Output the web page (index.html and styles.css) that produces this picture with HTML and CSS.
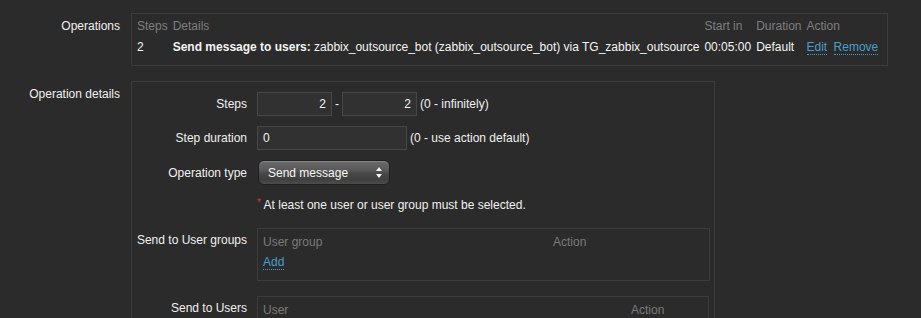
FILE: index.html
```html
<!DOCTYPE html>
<html lang="en">
<head>
<meta charset="utf-8">
<title>Operations</title>
<link rel="stylesheet" href="styles.css">
</head>
<body>
<div class="form">
  <div class="form-label">Operations</div>
  <div class="ops-box">
    <table class="ops-table">
      <thead>
        <tr>
          <th>Steps</th>
          <th>Details</th>
          <th>Start in</th>
          <th>Duration</th>
          <th>Action</th>
        </tr>
      </thead>
      <tbody>
        <tr>
          <td>2</td>
          <td><b>Send message to users:</b> zabbix_outsource_bot (zabbix_outsource_bot) via TG_zabbix_outsource</td>
          <td>00:05:00</td>
          <td>Default</td>
          <td><a class="link" href="#">Edit</a> <a class="link link-gap" href="#">Remove</a></td>
        </tr>
      </tbody>
    </table>
  </div>

  <div class="form-label">Operation details</div>
  <div class="details-box">
    <div class="details-grid">
      <div class="d-label">Steps</div>
      <div class="d-value inline">
        <input class="field num" type="text" value="2">
        <span>-</span>
        <input class="field num" type="text" value="2">
        <span>(0 - infinitely)</span>
      </div>

      <div class="d-label">Step duration</div>
      <div class="d-value inline">
        <input class="field wide" type="text" value="0">
        <span>(0 - use action default)</span>
      </div>

      <div class="d-label">Operation type</div>
      <div class="d-value">
        <div class="select">
          <span>Send message</span>
          <svg class="arrows" width="6" height="11" viewBox="0 0 6 11">
            <path d="M3 0 L6 4 L0 4 Z" fill="#f2f2f2"/>
            <path d="M0 7 L6 7 L3 11 Z" fill="#f2f2f2"/>
          </svg>
        </div>
      </div>

      <div class="d-label"></div>
      <div class="d-value required"><span class="star">*</span> At least one user or user group must be selected.</div>

      <div class="d-label top groups-label">Send to User groups</div>
      <div class="d-value groups-value">
        <div class="list-box">
          <div class="list-head groups-cols">
            <span>User group</span>
            <span>Action</span>
          </div>
          <div class="list-row"><a class="link" href="#">Add</a></div>
        </div>
      </div>

      <div class="d-label top users-label">Send to Users</div>
      <div class="d-value users-value">
        <div class="list-box users-box">
          <div class="list-head users-cols">
            <span>User</span>
            <span>Action</span>
          </div>
          <div class="list-row"><a class="link" href="#">Add</a></div>
        </div>
      </div>
    </div>
  </div>
</div>
</body>
</html>
```

FILE: styles.css
```css
html, body {
  margin: 0;
  padding: 0;
  background: #2b2b2b;
}

body {
  font-family: "Liberation Sans", Arial, sans-serif;
  font-size: 12px;
  line-height: 16px;
  color: #f0f0f0;
}

.form {
  display: grid;
  grid-template-columns: 120px auto;
  column-gap: 11px;
  row-gap: 15px;
  padding-top: 13px;
  align-items: start;
}

.form-label {
  text-align: right;
  padding-top: 5px;
  color: #f0f0f0;
}

.ops-box {
  box-sizing: border-box;
  width: 757px;
  height: 53px;
  border: 1px solid #3c3c3c;
  padding: 2px 2px;
}

.ops-table {
  border-collapse: collapse;
}

.ops-table th,
.ops-table td {
  padding: 2px 2px 2px 3px;
  text-align: left;
  white-space: nowrap;
  vertical-align: top;
}

.ops-table th {
  font-weight: normal;
  color: #7e7e7e;
}

.ops-table td {
  padding-top: 3px;
  color: #f4f4f4;
}

.link {
  color: #4a9ccc;
  text-decoration: none;
  border-bottom: 1px dotted #4a9ccc;
}

.link-gap {
  margin-left: 3px;
}

.details-box {
  box-sizing: border-box;
  width: 584px;
  height: 260px;
  border: 1px solid #3c3c3c;
  border-bottom: none;
}

.details-grid {
  display: grid;
  grid-template-columns: 115px auto;
  column-gap: 10px;
  row-gap: 10px;
  padding-top: 10px;
  align-items: center;
}

.d-label {
  text-align: right;
  color: #f0f0f0;
}

.d-label.top {
  align-self: start;
  padding-top: 4px;
}

.inline {
  display: flex;
  align-items: center;
  gap: 3px;
}

.field {
  box-sizing: border-box;
  height: 24px;
  margin: 0;
  border: 1px solid #474747;
  background: #313131;
  color: #f2f2f2;
  font-family: "Liberation Sans", Arial, sans-serif;
  font-size: 12px;
  padding: 0 5px;
  outline: none;
}

.field.num {
  width: 75px;
  text-align: right;
}

.field.wide {
  width: 150px;
}

.select {
  box-sizing: border-box;
  width: 132px;
  height: 25px;
  margin-left: 1px;
  display: flex;
  align-items: center;
  justify-content: space-between;
  padding: 0 7px 0 9px;
  border-radius: 6px;
  border: 1px solid #1f1f1f;
  background: linear-gradient(#6c6c6c 0%, #585858 40%, #474747 55%, #3f3f3f 80%, #4c4c4c 100%);
  box-shadow: inset 0 1px 0 rgba(255, 255, 255, 0.18);
  color: #f6f6f6;
}

.arrows {
  display: block;
}

.required {
  color: #f0f0f0;
}

.star {
  color: #d9323a;
  font-size: 10px;
  vertical-align: 3px;
}

.groups-label,
.groups-value {
  margin-top: 5px;
}

.users-label,
.users-value {
  margin-top: 5px;
}

.list-box {
  box-sizing: border-box;
  width: 453px;
  border: 1px solid #3c3c3c;
  padding: 5px 5px 10px;
}

.users-box {
  width: 452px;
}

.list-head {
  display: grid;
  color: #7a7a7a;
}

.groups-cols {
  grid-template-columns: 290px auto;
}

.users-cols {
  grid-template-columns: 368px auto;
}

.list-row {
  margin-top: 4px;
}
```
